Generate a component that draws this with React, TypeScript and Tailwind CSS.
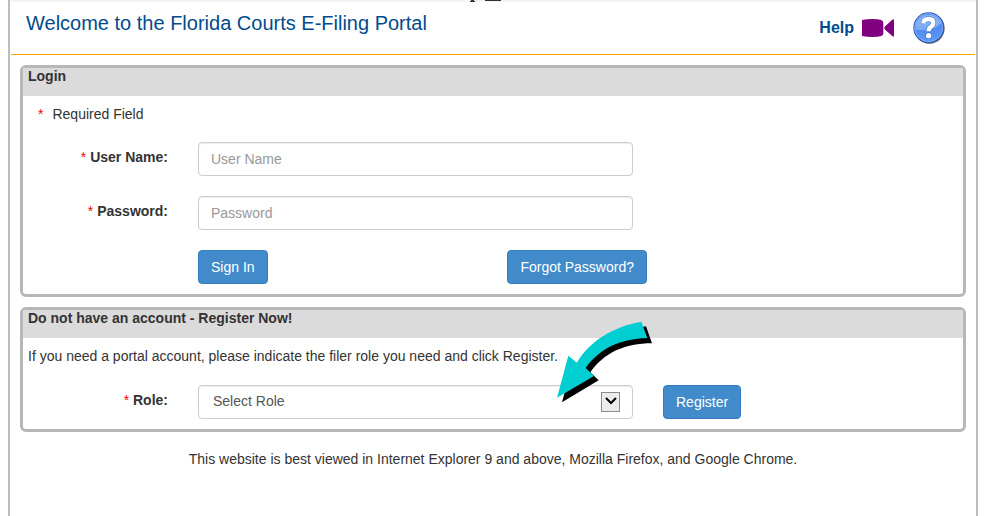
import * as React from "react";
import clsx from "clsx";

interface PanelProps {
  title: string;
  className?: string;
  children: React.ReactNode;
}

function Panel({ title, className, children }: PanelProps) {
  return (
    <section
      className={clsx(
        "relative mx-[10px] mt-[10px] rounded-md border-3 border-[#b7b7b7] pb-[10px]",
        className,
      )}
    >
      <h2 className="h-7 bg-[#dbdbdb] px-[5px] text-sm/4 font-bold">{title}</h2>
      {children}
    </section>
  );
}

function Required() {
  return <span className="font-normal text-[#ff0000]">*</span>;
}

interface FieldProps {
  id?: string;
  label?: string;
  action?: React.ReactNode;
  children: React.ReactNode;
}

function Field({ id, label, action, children }: FieldProps) {
  return (
    <div className="grid grid-cols-[145px_minmax(0,435px)_auto] justify-start gap-x-[30px]">
      {label ? (
        <label htmlFor={id} className="pt-[5px] text-right text-sm font-bold">
          <Required /> {label}
        </label>
      ) : (
        <span />
      )}
      {children}
      {action}
    </div>
  );
}

function Button({ children, ...props }: React.ComponentProps<"button">) {
  return (
    <button
      type="button"
      className="h-[34px] rounded border border-[#357ebd] bg-[#428bca] px-3 text-sm text-white"
      {...props}
    >
      {children}
    </button>
  );
}

const inputStyles =
  "h-[34px] w-full rounded border border-[#cccccc] bg-white px-3 text-sm text-[#555555] shadow-[inset_0_1px_1px_rgba(0,0,0,0.075)] placeholder:text-[#999999]";

function VideoIcon() {
  return (
    <svg viewBox="0 0 96 54" className="h-[18px] w-8" fill="#800080">
      <path d="M0 3Q16 0 32 0T58 3Q64 6 64 12V43Q64 49 58 51Q48 54 32 54T0 51Z" />
      <path d="M67 27Q67 23 71 20L90 3Q93 1 96 1V53Q93 53 90 50L71 34Q67 31 67 27Z" />
    </svg>
  );
}

function HelpIcon() {
  return (
    <svg viewBox="0 0 96 96" className="size-8">
      <defs>
        <linearGradient id="help-fill" x1="0" y1="0" x2="0" y2="1">
          <stop offset="0" stopColor="#4d8df0" />
          <stop offset="0.5" stopColor="#5088ee" />
          <stop offset="1" stopColor="#5c9cfa" />
        </linearGradient>
        <linearGradient id="help-gloss" x1="0" y1="0" x2="0" y2="1">
          <stop offset="0" stopColor="#8db6f8" />
          <stop offset="1" stopColor="#78a9f5" />
        </linearGradient>
      </defs>
      <circle cx="49" cy="49" r="46" fill="#555d6b" />
      <circle cx="47" cy="47" r="46" fill="#2a5bb8" />
      <circle cx="47" cy="47" r="43" fill="#8fb8fa" />
      <circle cx="47" cy="47" r="41" fill="url(#help-fill)" />
      <path d="M7 54A41 41 0 0 1 85 32Q70 51 42 53Q24 55 7 54Z" fill="url(#help-gloss)" />
      <path
        d="M31 34Q32 21 47 21Q61 21 61 33Q61 40 53 45Q47 49 47 58"
        fill="none"
        stroke="#3a6fc4"
        strokeWidth="16"
      />
      <circle cx="47" cy="71" r="10" fill="#3a6fc4" />
      <path
        d="M31 34Q32 21 47 21Q61 21 61 33Q61 40 53 45Q47 49 47 58"
        fill="none"
        stroke="#ffffff"
        strokeWidth="13"
      />
      <circle cx="47" cy="71" r="8" fill="#ffffff" />
    </svg>
  );
}

function PointerArrow() {
  return (
    <svg
      viewBox="51 63 288 246"
      className="pointer-events-none absolute top-[11px] left-[534px] h-[82px] w-24"
      aria-hidden="true"
    >
      <path
        d="M66 307L100 182L125 202C166 138 244 92 318 79L336 130C254 130 193 158 151 217L176 241Z"
        fill="#000000"
      />
      <path
        d="M51 293L85 167L111 188C146 124 224 78 304 65L322 114C240 116 177 147 137 204L162 228Z"
        fill="#00ced1"
      />
    </svg>
  );
}

export default function App() {
  return (
    <div className="min-h-screen bg-white pr-[13px] pl-2 font-['Liberation_Sans',Arial,sans-serif] text-sm text-[#333333]">
      <div className="min-h-screen border-x-2 border-[#bdbdbd]">
        <div className="flex h-[2px] justify-center bg-[#f5f5f5] pr-[14px]">
          <svg viewBox="0 0 32 2" className="h-[2px] w-8" fill="#333333" aria-hidden="true">
            <path d="M1 0H4V1H5V2H0V1H1ZM15 0H31V1H15Z" />
          </svg>
        </div>

        <header className="mx-px flex h-[53px] items-start justify-between border-b border-[#ffa500] pr-[30px] pl-[15px]">
          <h1 className="pt-[7px] text-xl text-[#004b8d]">
            Welcome to the Florida Courts E-Filing Portal
          </h1>
          <div className="flex items-center pt-[10px]">
            <a href="#help" className="flex items-center gap-2 text-base font-bold text-[#004b8d]">
              Help
              <VideoIcon />
            </a>
            <a href="#faq" aria-label="Help topics" className="ml-[19px]">
              <HelpIcon />
            </a>
          </div>
        </header>

        <main>
          <Panel title="Login">
            <p className="mt-2 mb-[18px] flex gap-[9px] px-[15px]">
              <Required /> Required Field
            </p>
            <form className="flex flex-col gap-5">
              <Field id="username" label="User Name:">
                <input id="username" type="text" placeholder="User Name" className={inputStyles} />
              </Field>
              <Field id="password" label="Password:">
                <input id="password" type="password" placeholder="Password" className={inputStyles} />
              </Field>
              <Field>
                <div className="-mr-[14px] flex justify-between">
                  <Button>Sign In</Button>
                  <Button>Forgot Password?</Button>
                </div>
              </Field>
            </form>
          </Panel>

          <Panel title="Do not have an account - Register Now!">
            <p className="mt-2 mb-[19px] px-[5px]">
              If you need a portal account, please indicate the filer role you need and click
              Register.
            </p>
            <Field id="role" label="Role:" action={<Button>Register</Button>}>
              <div className="relative">
                <select id="role" className={clsx(inputStyles, "appearance-none pb-[2px] pl-[14px]")}>
                  <option>Select Role</option>
                </select>
                <span className="pointer-events-none absolute top-[7px] right-[13px] flex h-5 w-[19px] items-center justify-center border border-[#8c8c8c] bg-[#ececec] pb-[2px]">
                  <svg viewBox="0 0 12 8" className="h-2 w-3" fill="none" stroke="#000000" strokeWidth="2">
                    <path d="M1 1L6 6L11 1" />
                  </svg>
                </span>
              </div>
            </Field>
            <PointerArrow />
          </Panel>
        </main>

        <footer className="mt-[17px] text-center">
          This website is best viewed in Internet Explorer 9 and above, Mozilla Firefox, and Google
          Chrome.
        </footer>
      </div>
    </div>
  );
}
